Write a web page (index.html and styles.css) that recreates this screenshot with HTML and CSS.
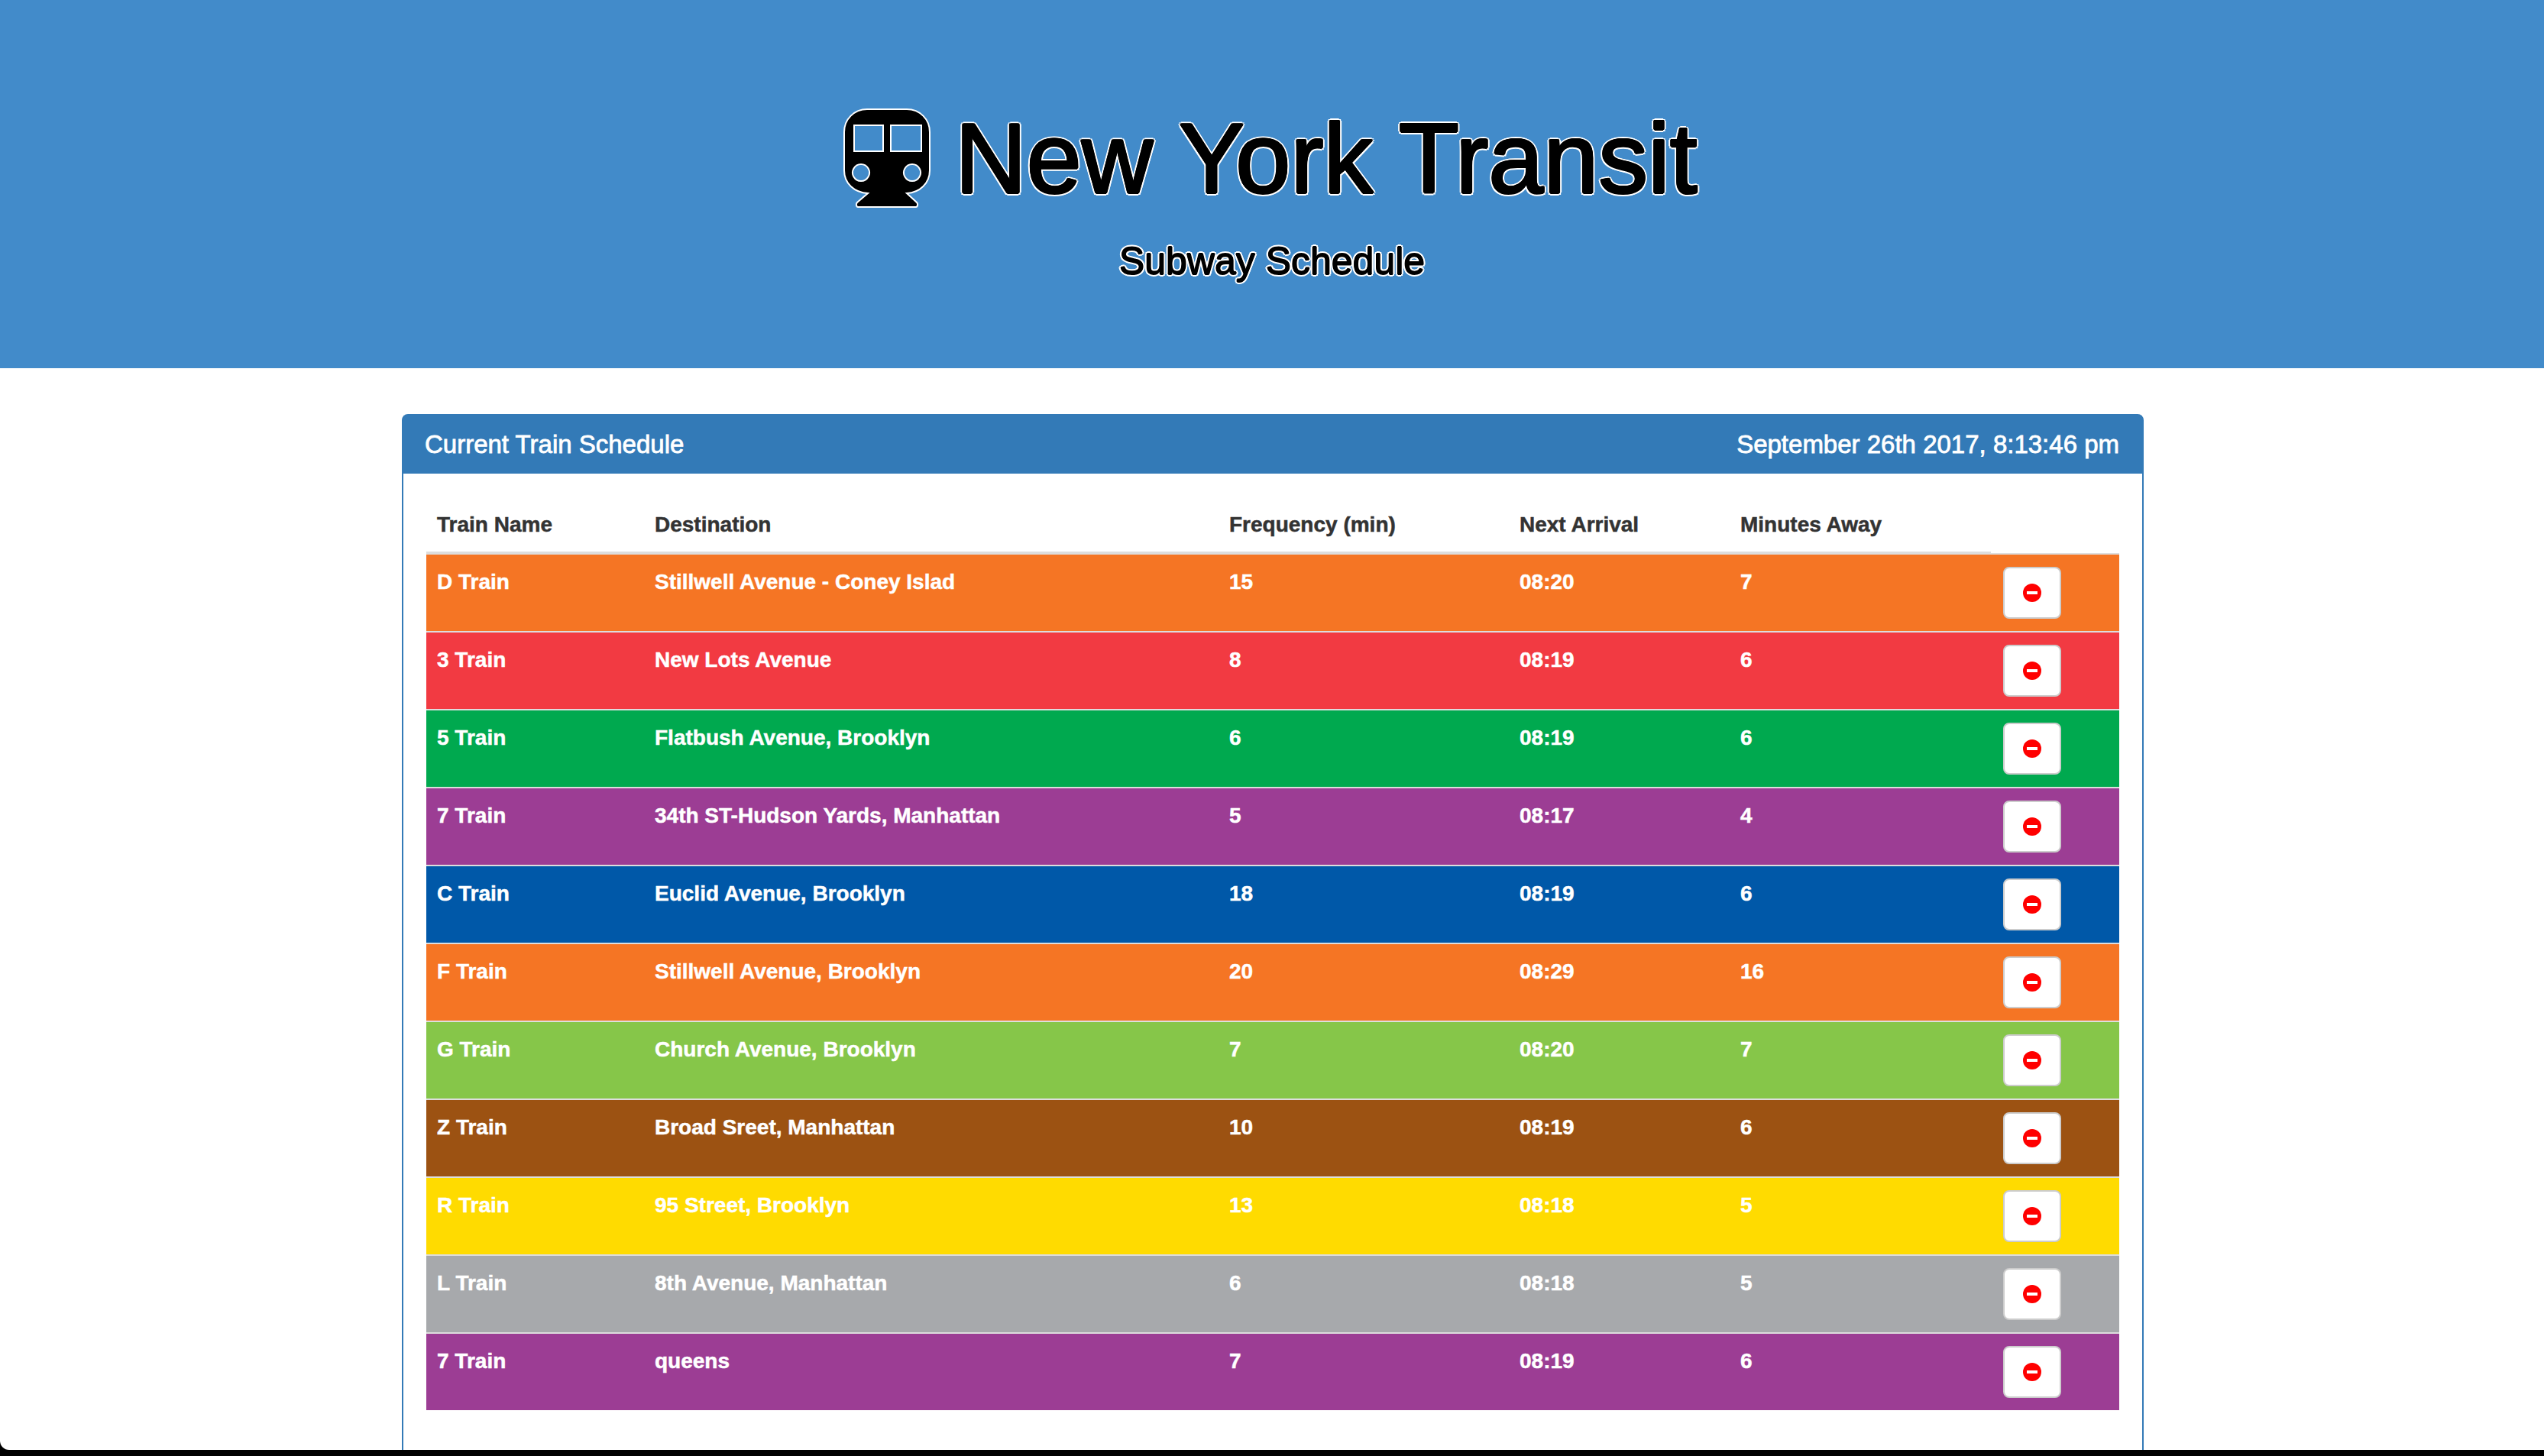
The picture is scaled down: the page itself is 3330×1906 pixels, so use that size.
FILE: index.html
```html
<!DOCTYPE html>
<html lang="en">
<head>
    <meta charset="UTF-8">
    <title>New York Transit</title>
    <link rel="stylesheet" href="styles.css">
</head>
<body>
    <div class="page">

        <!-- Header -->
        <div class="jumbotron">
            <h1 class="title">
                <svg class="train-icon" viewBox="0 0 114 132">
                    <path fill-rule="evenodd" d="M31 1H83C100 1 113 14 113 31V81C113 98 100 110 83 111L96 123C98 125 97 129 95 129H19C17 129 16 125 18 123L32 111C14 110 1 98 1 81V31C1 14 14 1 31 1ZM14 22V56H52V22ZM62 22V56H102V22ZM23 73A11 11 0 1 0 23.01 73ZM90 73A11 11 0 1 0 90.01 73Z"/>
                </svg>
                New York Transit
            </h1>
            <h3 class="subtitle">Subway Schedule</h3>
        </div>

        <!-- Schedule -->
        <div class="panel">
            <div class="panel-heading">
                <span>Current Train Schedule</span>
                <span>September 26th 2017, 8:13:46 pm</span>
            </div>
            <div class="panel-body">
                <table class="schedule">
                    <colgroup>
                        <col class="col-name">
                        <col class="col-dest">
                        <col class="col-freq">
                        <col class="col-next">
                        <col class="col-away">
                        <col class="col-remove">
                    </colgroup>
                    <thead>
                        <tr>
                            <th>Train Name</th>
                            <th>Destination</th>
                            <th>Frequency (min)</th>
                            <th>Next Arrival</th>
                            <th>Minutes Away</th>
                            <th class="th-empty"></th>
                        </tr>
                    </thead>
                    <tbody>
                        <tr class="line-orange">
                            <td>D Train</td><td>Stillwell Avenue - Coney Islad</td><td>15</td><td>08:20</td><td>7</td>
                            <td><button class="btn-remove"><svg class="icon-remove" viewBox="0 0 24 24"><circle cx="12" cy="12" r="12"/><rect x="5" y="10" width="14" height="4"/></svg></button></td>
                        </tr>
                        <tr class="line-red">
                            <td>3 Train</td><td>New Lots Avenue</td><td>8</td><td>08:19</td><td>6</td>
                            <td><button class="btn-remove"><svg class="icon-remove" viewBox="0 0 24 24"><circle cx="12" cy="12" r="12"/><rect x="5" y="10" width="14" height="4"/></svg></button></td>
                        </tr>
                        <tr class="line-green">
                            <td>5 Train</td><td>Flatbush Avenue, Brooklyn</td><td>6</td><td>08:19</td><td>6</td>
                            <td><button class="btn-remove"><svg class="icon-remove" viewBox="0 0 24 24"><circle cx="12" cy="12" r="12"/><rect x="5" y="10" width="14" height="4"/></svg></button></td>
                        </tr>
                        <tr class="line-purple">
                            <td>7 Train</td><td>34th ST-Hudson Yards, Manhattan</td><td>5</td><td>08:17</td><td>4</td>
                            <td><button class="btn-remove"><svg class="icon-remove" viewBox="0 0 24 24"><circle cx="12" cy="12" r="12"/><rect x="5" y="10" width="14" height="4"/></svg></button></td>
                        </tr>
                        <tr class="line-blue">
                            <td>C Train</td><td>Euclid Avenue, Brooklyn</td><td>18</td><td>08:19</td><td>6</td>
                            <td><button class="btn-remove"><svg class="icon-remove" viewBox="0 0 24 24"><circle cx="12" cy="12" r="12"/><rect x="5" y="10" width="14" height="4"/></svg></button></td>
                        </tr>
                        <tr class="line-orange">
                            <td>F Train</td><td>Stillwell Avenue, Brooklyn</td><td>20</td><td>08:29</td><td>16</td>
                            <td><button class="btn-remove"><svg class="icon-remove" viewBox="0 0 24 24"><circle cx="12" cy="12" r="12"/><rect x="5" y="10" width="14" height="4"/></svg></button></td>
                        </tr>
                        <tr class="line-lime">
                            <td>G Train</td><td>Church Avenue, Brooklyn</td><td>7</td><td>08:20</td><td>7</td>
                            <td><button class="btn-remove"><svg class="icon-remove" viewBox="0 0 24 24"><circle cx="12" cy="12" r="12"/><rect x="5" y="10" width="14" height="4"/></svg></button></td>
                        </tr>
                        <tr class="line-brown">
                            <td>Z Train</td><td>Broad Sreet, Manhattan</td><td>10</td><td>08:19</td><td>6</td>
                            <td><button class="btn-remove"><svg class="icon-remove" viewBox="0 0 24 24"><circle cx="12" cy="12" r="12"/><rect x="5" y="10" width="14" height="4"/></svg></button></td>
                        </tr>
                        <tr class="line-yellow">
                            <td>R Train</td><td>95 Street, Brooklyn</td><td>13</td><td>08:18</td><td>5</td>
                            <td><button class="btn-remove"><svg class="icon-remove" viewBox="0 0 24 24"><circle cx="12" cy="12" r="12"/><rect x="5" y="10" width="14" height="4"/></svg></button></td>
                        </tr>
                        <tr class="line-gray">
                            <td>L Train</td><td>8th Avenue, Manhattan</td><td>6</td><td>08:18</td><td>5</td>
                            <td><button class="btn-remove"><svg class="icon-remove" viewBox="0 0 24 24"><circle cx="12" cy="12" r="12"/><rect x="5" y="10" width="14" height="4"/></svg></button></td>
                        </tr>
                        <tr class="line-purple">
                            <td>7 Train</td><td>queens</td><td>7</td><td>08:19</td><td>6</td>
                            <td><button class="btn-remove"><svg class="icon-remove" viewBox="0 0 24 24"><circle cx="12" cy="12" r="12"/><rect x="5" y="10" width="14" height="4"/></svg></button></td>
                        </tr>
                    </tbody>
                </table>
            </div>
        </div>

    </div>
</body>
</html>
```

FILE: styles.css
```css
html, body {
    margin: 0;
    height: 100%;
}
body {
    background: #000;
    font-family: "Liberation Sans", Arial, sans-serif;
    font-size: 28px;
    line-height: 40px;
    color: #333;
    overflow: hidden;
}
.page {
    height: 1898px;
    background: #fff;
    border-bottom-left-radius: 12px;
    overflow: hidden;
}

/* Header */
.jumbotron {
    height: 482px;
    box-sizing: border-box;
    padding-top: 142px;
    background: #428bca;
    text-align: center;
    color: #000;
}
.title {
    display: flex;
    justify-content: center;
    align-items: flex-start;
    gap: 32px;
    margin: 0;
    padding-right: 4px;
    height: 130px;
    font-size: 129.5px;
    line-height: 130px;
    font-weight: normal;
    /* black layers thicken the letters, white layers make the outline */
    text-shadow: 1.5px 0 #000, -1.5px 0 #000, 0 1.5px #000, 0 -1.5px #000,
        1.1px 1.1px #000, -1.1px 1.1px #000, 1.1px -1.1px #000, -1.1px -1.1px #000,
        3.5px 0 #fff, -3.5px 0 #fff, 0 3.5px #fff, 0 -3.5px #fff,
        2.5px 2.5px #fff, -2.5px 2.5px #fff, 2.5px -2.5px #fff, -2.5px -2.5px #fff;
}
.train-icon {
    width: 114px;
    height: 132px;
    fill: #000;
    stroke: #fff;
    stroke-width: 2;
}
.subtitle {
    margin: 42px 0 0;
    font-size: 50px;
    line-height: 56px;
    font-weight: normal;
    text-shadow: 0.7px 0 #000, -0.7px 0 #000, 0 0.7px #000, 0 -0.7px #000,
        2.8px 0 #fff, -2.8px 0 #fff, 0 2.8px #fff, 0 -2.8px #fff,
        2px 2px #fff, -2px 2px #fff, 2px -2px #fff, -2px -2px #fff;
}

/* Panel */
.panel {
    width: 2280px;
    box-sizing: border-box;
    height: 1400px;
    margin: 60px 0 0 526px;
    border: 2px solid #337ab7;
    border-radius: 8px;
}
.panel-heading {
    display: flex;
    justify-content: space-between;
    height: 76px;
    padding: 0 30px 0 28px;
    background: #337ab7;
    color: #fff;
    font-size: 33px;
    line-height: 75px;
    -webkit-text-stroke: 0.8px #fff;
}
.panel-body {
    padding: 32px 30px;
}

/* Table */
.schedule {
    width: 2216px;
    table-layout: fixed;
    border-collapse: separate;
    border-spacing: 0;
    font-weight: bold;
    -webkit-text-stroke: 0.5px;
}
.col-name { width: 285px; }
.col-dest { width: 752px; }
.col-freq { width: 380px; }
.col-next { width: 289px; }
.col-away { width: 342px; }
.col-remove { width: 168px; }
.schedule th {
    padding: 15px 14px;
    text-align: left;
    border-bottom: 2px solid #ddd;
}
.schedule th.th-empty {
    border-bottom: 0;
}
.schedule td {
    height: 68px;
    padding: 16px 14px;
    border-top: 2px solid #ddd;
    color: #fff;
    vertical-align: top;
}
.schedule td:last-child {
    padding-left: 16px;
}
.btn-remove {
    display: flex;
    align-items: center;
    justify-content: center;
    width: 76px;
    height: 68px;
    padding: 0;
    background: #fff;
    border: 2px solid #ccc;
    border-radius: 8px;
}
.icon-remove {
    width: 24px;
    height: 24px;
    fill: #f00;
}
.icon-remove rect {
    fill: #fff;
}

.line-orange { background: #f57524; }
.line-red { background: #f23a42; }
.line-green { background: #00a94f; }
.line-purple { background: #9c3d94; }
.line-blue { background: #0058a8; }
.line-lime { background: #86c649; }
.line-brown { background: #9c5212; }
.line-yellow { background: #ffdb00; }
.line-gray { background: #a7a9ac; }
```
